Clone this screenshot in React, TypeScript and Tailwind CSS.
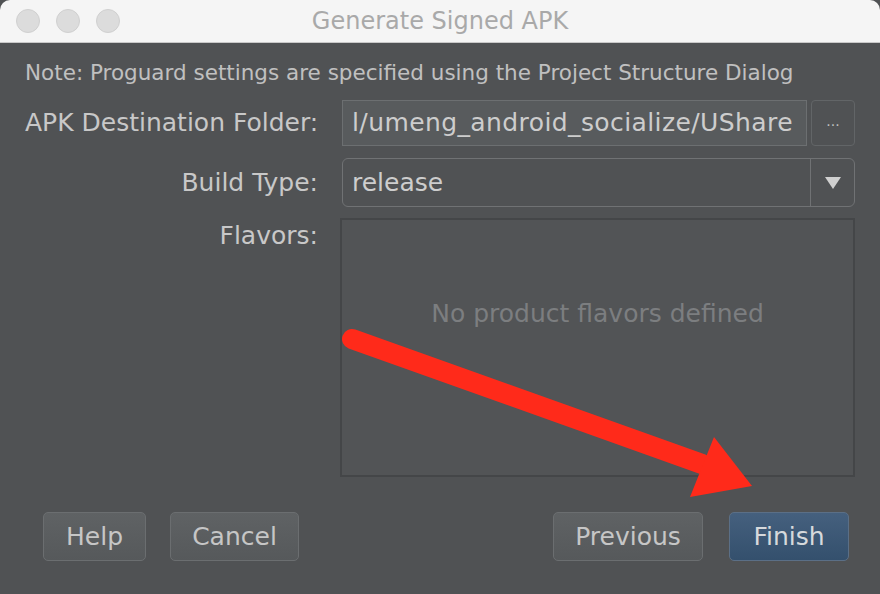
import React from "react";

const font = { fontFamily: '"DejaVu Sans", "Liberation Sans", sans-serif' };

function Btn({ children, w, primary }: { children: React.ReactNode; w: string; primary?: boolean }) {
  return (
    <div
      className={
        "h-[49px] flex items-center justify-center rounded-[5px] border text-[25px] " +
        w +
        (primary
          ? " border-[#5b6f86] bg-gradient-to-b from-[#45607e] to-[#34506d] text-[#d6d9dc]"
          : " border-[#6b6e70] bg-gradient-to-b from-[#5f6264] to-[#56595b] text-[#c6c6c6]")
      }
    >
      {children}
    </div>
  );
}

export default function App() {
  return (
    <div className="w-[880px] h-[594px] bg-[#505254] relative overflow-hidden" style={font}>
      {/* Title bar */}
      <div className="h-[43px] bg-[#f5f5f5] border-b border-[#c9c9c9] rounded-t-[10px] flex items-center relative">
        <div className="flex gap-[16px] pl-[16px]">
          <div className="w-[24px] h-[24px] rounded-full bg-[#dcdcdc] border border-[#d0d0d0]" />
          <div className="w-[24px] h-[24px] rounded-full bg-[#dcdcdc] border border-[#d0d0d0]" />
          <div className="w-[24px] h-[24px] rounded-full bg-[#dcdcdc] border border-[#d0d0d0]" />
        </div>
        <div className="absolute inset-0 flex items-center justify-center text-[24px] text-[#a9a9a9]">
          Generate Signed APK
        </div>
      </div>

      {/* Body */}
      <div className="pl-[25px] pr-[25px] pt-[17px]">
        <div className="text-[21.5px] text-[#c0c0c0] leading-[26px] whitespace-nowrap">
          Note: Proguard settings are specified using the Project Structure Dialog
        </div>

        <div className="mt-[14px] flex items-center h-[46px]">
          <div className="w-[293px] text-right text-[25px] text-[#c8c8c8] whitespace-nowrap">APK Destination Folder:</div>
          <div className="ml-[24px] w-[465px] h-[46px] bg-[#585b5d] border border-[#6c6f71] flex items-center px-[9px] text-[25px] tracking-[0.4px] text-[#cdcdcd] overflow-hidden whitespace-nowrap">
            l/umeng_android_socialize/UShare
          </div>
          <div className="ml-[4px] w-[44px] h-[46px] rounded-[4px] border border-[#626567] flex items-center justify-center text-[14px] text-[#c0c0c0] pb-[4px]">
            ...
          </div>
        </div>

        <div className="mt-[12px] flex items-center h-[49px]">
          <div className="w-[293px] text-right text-[25px] text-[#c8c8c8]">Build Type:</div>
          <div className="ml-[24px] w-[513px] h-[49px] rounded-[6px] border border-[#707274] flex items-stretch">
            <div className="flex-1 flex items-center px-[9px] text-[25px] text-[#cdcdcd]">release</div>
            <div className="w-[44px] border-l border-[#707274] flex items-center justify-center">
              <svg width="16" height="12" viewBox="0 0 16 12">
                <polygon points="0,0 16,0 8,12" fill="#d0d0d0" />
              </svg>
            </div>
          </div>
        </div>

        <div className="mt-[11px] flex items-start">
          <div className="w-[293px] text-right text-[25px] text-[#c8c8c8] leading-[32px] pt-[2px]">Flavors:</div>
          <div className="ml-[22px] w-[515px] h-[259px] border-[2px] border-[#444648] bg-[#525456] flex items-center justify-center">
            <span className="text-[25px] text-[#7c7e80] -mt-[68px] whitespace-nowrap">No product flavors defined</span>
          </div>
        </div>

        <div className="mt-[35px] flex items-center pl-[18px] pr-[6px]">
          <Btn w="w-[103px]">Help</Btn>
          <div className="ml-[24px]">
            <Btn w="w-[129px]">Cancel</Btn>
          </div>
          <div className="flex-1" />
          <Btn w="w-[150px]">Previous</Btn>
          <div className="ml-[26px]">
            <Btn w="w-[120px]" primary>
              Finish
            </Btn>
          </div>
        </div>
      </div>

      {/* Red arrow annotation */}
      <svg className="absolute left-0 top-0 pointer-events-none" width="880" height="594">
        <line x1="352" y1="339" x2="702" y2="464" stroke="#ff2a1a" strokeWidth="20" strokeLinecap="round" />
        <polygon points="714,437 752,486 690,497" fill="#ff2a1a" />
      </svg>
    </div>
  );
}
